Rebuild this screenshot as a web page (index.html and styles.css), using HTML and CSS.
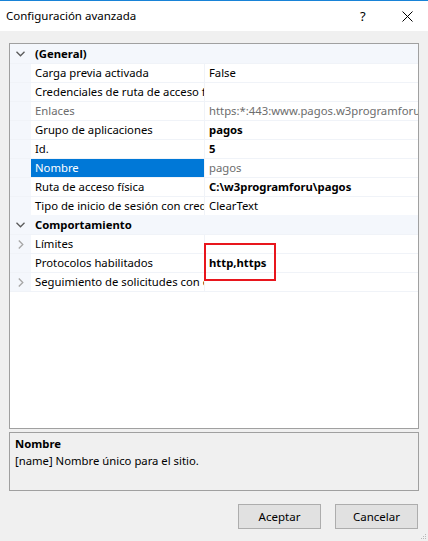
FILE: index.html
```html
<!DOCTYPE html>
<html lang="es">
<head>
<meta charset="utf-8">
<title>Configuración avanzada</title>
<link rel="stylesheet" href="styles.css">
</head>
<body>
<div class="window">
  <div class="titlebar">
    <span class="title">Configuración avanzada</span>
    <span class="help">?</span>
    <span class="close">
      <svg width="11" height="11" viewBox="0 0 11 11"><path d="M0.5 0.5 L10.5 10.5 M10.5 0.5 L0.5 10.5" stroke="#000" stroke-width="1" fill="none"/></svg>
    </span>
  </div>
  <div class="content">
    <div class="grid">
      <div class="row cat">
        <div class="gut"><svg class="chev" width="9" height="6" viewBox="0 0 9 6"><path d="M0.5 0.8 L4.5 4.8 L8.5 0.8" stroke="#5a5a5a" stroke-width="1.3" fill="none"/></svg></div>
        <div class="catname">(General)</div>
      </div>
      <div class="row"><div class="gut"></div><div class="name">Carga previa activada</div><div class="val">False</div></div>
      <div class="row"><div class="gut"></div><div class="name">Credenciales de ruta de acceso física</div><div class="val"></div></div>
      <div class="row ro"><div class="gut"></div><div class="name">Enlaces</div><div class="val">https:*:443:www.pagos.w3programforu.com</div></div>
      <div class="row"><div class="gut"></div><div class="name">Grupo de aplicaciones</div><div class="val b">pagos</div></div>
      <div class="row"><div class="gut"></div><div class="name">Id.</div><div class="val b">5</div></div>
      <div class="row sel"><div class="gut"></div><div class="name">Nombre</div><div class="val">pagos</div></div>
      <div class="row"><div class="gut"></div><div class="name">Ruta de acceso física</div><div class="val b">C:\w3programforu\pagos</div></div>
      <div class="row"><div class="gut"></div><div class="name">Tipo de inicio de sesión con credenciales</div><div class="val">ClearText</div></div>
      <div class="row cat">
        <div class="gut"><svg class="chev" width="9" height="6" viewBox="0 0 9 6"><path d="M0.5 0.8 L4.5 4.8 L8.5 0.8" stroke="#5a5a5a" stroke-width="1.3" fill="none"/></svg></div>
        <div class="catname">Comportamiento</div>
      </div>
      <div class="row"><div class="gut"><svg class="exp" width="6" height="9" viewBox="0 0 6 9"><path d="M0.8 0.5 L4.8 4.5 L0.8 8.5" stroke="#a6a6a6" stroke-width="1.3" fill="none"/></svg></div><div class="name">Límites</div><div class="val"></div></div>
      <div class="row"><div class="gut"></div><div class="name">Protocolos habilitados</div><div class="val b">http,https</div></div>
      <div class="row last"><div class="gut"><svg class="exp" width="6" height="9" viewBox="0 0 6 9"><path d="M0.8 0.5 L4.8 4.5 L0.8 8.5" stroke="#a6a6a6" stroke-width="1.3" fill="none"/></svg></div><div class="name">Seguimiento de solicitudes con error</div><div class="val"></div></div>
      <div class="highlight"></div>
    </div>
    <div class="desc">
      <div class="desc-title">Nombre</div>
      <div class="desc-text">[name] Nombre único para el sitio.</div>
    </div>
    <div class="buttons">
      <button class="btn">Aceptar</button>
      <button class="btn">Cancelar</button>
    </div>
  </div>
  <svg class="grip" width="6" height="6" viewBox="0 0 6 6"><rect x="4" y="0" width="1" height="1" fill="#b8b8b8"/><rect x="2" y="2" width="1" height="1" fill="#b8b8b8"/><rect x="4" y="2" width="1" height="1" fill="#b8b8b8"/><rect x="0" y="4" width="1" height="1" fill="#b8b8b8"/><rect x="2" y="4" width="1" height="1" fill="#b8b8b8"/><rect x="4" y="4" width="1" height="1" fill="#b8b8b8"/></svg>
</div>
</body>
</html>
```

FILE: styles.css
```css
* { box-sizing: border-box; }
html, body {
  margin: 0;
  padding: 0;
}
body {
  width: 428px;
  height: 541px;
  overflow: hidden;
  font-family: "Noto Sans", "Segoe UI", sans-serif;
  font-size: 11.3px;
  color: #000;
  background: #f0f0f0;
}
.window {
  position: relative;
  width: 428px;
  height: 541px;
  background: #f0f0f0;
}
.titlebar {
  height: 31px;
  background: #fff;
  border-top: 1px solid #1883d7;
  display: flex;
  align-items: center;
  padding-left: 6px;
}
.title {
  flex: 1;
  font-size: 11.5px;
  line-height: 16px;
  padding-bottom: 1px;
}
.help {
  width: 12px;
  font-size: 13px;
  margin-right: 30px;
  padding-bottom: 1px;
}
.close {
  width: 11px;
  height: 11px;
  margin-right: 15px;
  display: flex;
}
.content {
  padding: 12px 9px 0 9px;
}
.grid {
  position: relative;
  height: 386px;
  background: #fff;
  border: 1px solid #a0a0a0;
  overflow: hidden;
}
.row {
  display: flex;
  height: 19px;
  border-top: 1px solid #f0f3f8;
  line-height: 18px;
  white-space: nowrap;
}
.row.last {
  height: 20px;
  border-bottom: 1px solid #f0f3f8;
}
.gut {
  width: 21px;
  flex: none;
  background: #f4f7fc;
  display: flex;
  align-items: center;
}
.chev { margin-left: 6px; margin-top: -1px; }
.exp { margin-left: 8px; }
.name {
  width: 174px;
  flex: none;
  padding-left: 4px;
  overflow: hidden;
  text-overflow: clip;
  border-right: 1px solid #f0f3f8;
}
.val {
  flex: 1;
  min-width: 0;
  padding-left: 4px;
  overflow: hidden;
  text-overflow: clip;
}
.b { font-weight: bold; }
.ro .name, .ro .val { color: #6d6d6d; }
.sel .name {
  background: #0078d7;
  color: #fff;
}
.sel .val { color: #6d6d6d; }
.cat {
  background: #f4f7fc;
  border-top-color: #f4f7fc;
}
.catname {
  padding-left: 4px;
  font-weight: bold;
}
.highlight {
  position: absolute;
  left: 194px;
  top: 199px;
  width: 72px;
  height: 38px;
  border: 2px solid #e8161d;
}
.desc {
  margin-top: 3px;
  height: 59px;
  border: 1px solid #a0a0a0;
  background: #f0f0f0;
  padding: 3px 5px;
}
.desc-title {
  font-weight: bold;
  line-height: 16px;
}
.desc-text {
  line-height: 16px;
  margin-top: 1px;
}
.buttons {
  display: flex;
  justify-content: flex-end;
  gap: 14px;
  margin-top: 13px;
  padding-right: 1px;
}
.btn {
  width: 83px;
  height: 25px;
  background: #e1e1e1;
  border: 1px solid #adadad;
  font-family: "Noto Sans", "Segoe UI", sans-serif;
  font-size: 11.5px;
  color: #000;
  padding: 0;
}
.grip {
  position: absolute;
  right: 1px;
  bottom: 1px;
}
```
